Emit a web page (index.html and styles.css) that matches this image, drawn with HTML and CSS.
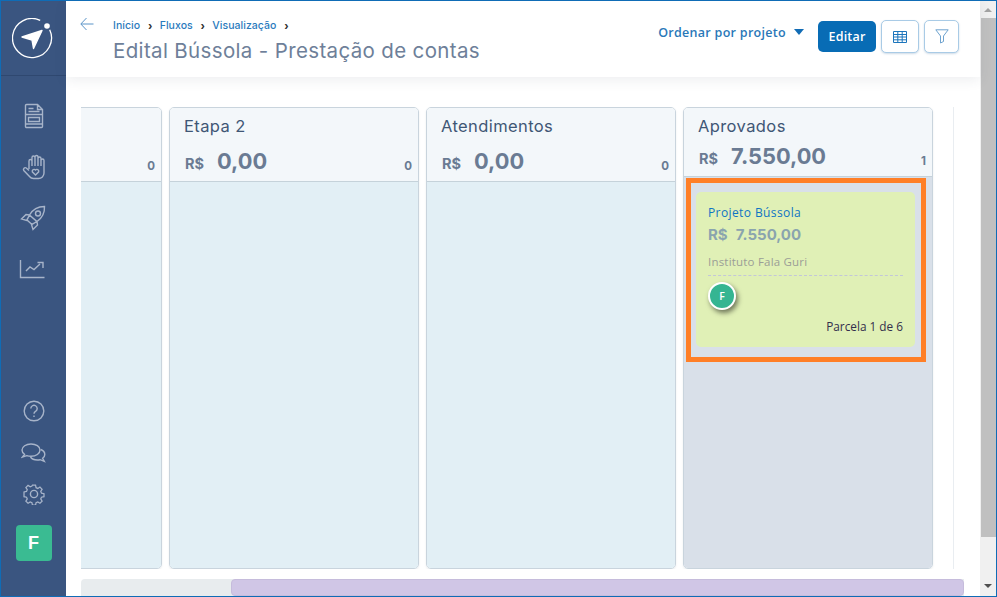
FILE: index.html
```html
<!DOCTYPE html>
<html lang="pt-BR">
<head>
<meta charset="utf-8">
<title>Edital Bússola - Prestação de contas</title>
<link rel="stylesheet" href="styles.css">
</head>
<body>
<div class="window">
  <aside class="sidebar">
    <div class="logo">
      <svg width="43" height="42" viewBox="0 0 43 42" fill="none">
        <path d="M37.7 11.800A19.500 19.500 0 1 1 28.200 2.300" stroke="#fff" stroke-width="1.300"/>
        <circle cx="35" cy="8" r="2.800" fill="#fff"/>
        <path d="M10 19 30 12.500 21.500 30.500 20 22Z" fill="#fff" stroke="#fff" stroke-width="1.400" stroke-linejoin="round"/>
      </svg>
    </div>
    <nav class="nav-top">
      <svg class="ico" width="22" height="26" viewBox="0 0 22 26"><path d="M2.500 2.500a1 1 0 0 1 1-1h11l5 5v17a1 1 0 0 1-1 1h-15a1 1 0 0 1-1-1zM14.500 1.500v5h5M5.500 5.500h5M5.500 8.500h11M2.500 11.500h17M5.500 14.500h11v4h-11zM2.500 21h17"/></svg>
      <svg class="ico" width="24" height="26" viewBox="0 0 24 26"><path d="M7 15V7a1.500 1.500 0 0 1 3 0V3.500a1.500 1.500 0 0 1 3 0V3a1.500 1.500 0 0 1 3 0V4.500a1.500 1.500 0 0 1 3 0V6.500a1.500 1.500 0 0 1 3 0V19a5.500 5.500 0 0 1-5.500 5.500H11.500A5 5 0 0 1 7.500 22.500L1.800 16.500a1.800 1.800 0 0 1 2.500-2.500L7 16.500M10 7V12M13 3.500V12M16 3V12M19 4.500V12"/><path d="M13.500 21 10.300 17.800a1.900 1.900 0 0 1 3.200-1.800 1.900 1.900 0 0 1 3.200 1.800z"/></svg>
      <svg class="ico rocket" width="26" height="26" viewBox="0 0 26 26"><path d="M24.500 1.500C24.800 8 22 13 17 16.500L9.500 10C13 4 18 1.500 24.500 1.500ZM9.500 10 6 9.500 1.500 14l5 1.500zM17 16.500 17.500 20 13 24.500l-1.500-5zM9.500 10 7 15l5 4.500 5-3"/><circle cx="18" cy="8.500" r="2.500"/></svg>
      <svg class="ico chart" width="26" height="20" viewBox="0 0 26 20"><path d="M1.500 1v17.500H25.500M7 12l4-4 4 2.500 6-5.500M18.500 3.500h5.500V9"/></svg>
    </nav>
    <nav class="nav-bottom">
      <svg class="ico" width="22" height="22" viewBox="0 0 22 22"><circle cx="11" cy="11" r="9.800"/><path d="M7.800 8.500a3.200 3.200 0 1 1 4.800 2.800c-1 .6-1.600 1.200-1.600 2.400"/><path d="M11 15.500v1.500"/></svg>
      <svg class="ico" width="25" height="20" viewBox="0 0 25 20"><path d="M10 1C5 1 1 3.600 1 7c0 1.800 1 3.200 2.500 4.300L1.500 14l4.300-1.300c1.300.4 2.700.6 4.200.6 5 0 9-2.700 9-6.300S15 1 10 1Z"/><path d="M19.700 6.500c2.500 1 4.100 2.800 4.100 4.900 0 1.600-.8 2.900-2.200 3.900l1.700 3-4.200-1.600c-.9.200-1.800.3-2.800.3-3 0-5.600-1.200-6.800-3"/></svg>
      <svg class="ico" width="22" height="22" viewBox="0 0 22 22"><path d="M9.300 1.200h3.400l.6 2.800 1.900.8 2.400-1.500 2.400 2.400-1.500 2.400.8 1.900 2.800.6v3.400l-2.800.6-.8 1.900 1.500 2.400-2.400 2.400-2.400-1.500-1.900.8-.6 2.800H9.300l-.6-2.800-1.900-.8-2.400 1.500-2.400-2.400 1.500-2.400-.8-1.900-2.800-.6V8.700l2.800-.6.8-1.900-1.500-2.400 2.400-2.400 2.400 1.500 1.900-.8z" transform="translate(1.100 1.100) scale(.9)"/><circle cx="11" cy="11" r="3.600"/></svg>
      <div class="user-tile">F</div>
    </nav>
  </aside>

  <div class="main">
    <header class="topbar">
      <svg class="back" width="14" height="14" viewBox="0 0 14 14" fill="none"><path d="M13.500 7H1M6.500 1 .8 7l5.700 6" stroke="#5b94c8" stroke-width="1"/></svg>
      <div class="heading">
        <div class="crumbs">
          <span>Início</span><i>›</i><span>Fluxos</span><i>›</i><span>Visualização</span><i>›</i>
        </div>
        <h1>Edital Bússola - Prestação de contas</h1>
      </div>
      <div class="actions">
        <div class="sort">Ordenar por projeto<b class="caret"></b></div>
        <button class="btn-primary">Editar</button>
        <button class="btn-icon">
          <svg width="14" height="12" viewBox="0 0 14 12" fill="none"><path d="M.5.500h13v11H.5zM.5 3.500h13M.5 6h13M.5 8.800h13M4.800 .500v11M9.200 .500v11" stroke="#1c75bc"/></svg>
        </button>
        <button class="btn-icon">
          <svg width="14" height="15" viewBox="0 0 14 15" fill="none"><path d="M.8.800h12.400L8.500 7v5.500L5.500 14V7z" stroke="#6fa3cf"/></svg>
        </button>
      </div>
    </header>

    <section class="board-wrap">
      <div class="board">
        <div class="column">
          <div class="col-head"><div class="col-title">&nbsp;</div><div class="col-sum"><span class="count">0</span></div></div>
          <div class="col-body"></div>
        </div>
        <div class="column">
          <div class="col-head"><div class="col-title">Etapa 2</div><div class="col-sum"><span class="cur">R$</span><span class="val">0,00</span><span class="count">0</span></div></div>
          <div class="col-body"></div>
        </div>
        <div class="column">
          <div class="col-head"><div class="col-title">Atendimentos</div><div class="col-sum"><span class="cur">R$</span><span class="val">0,00</span><span class="count">0</span></div></div>
          <div class="col-body"></div>
        </div>
        <div class="column">
          <div class="col-head col-head-short"><div class="col-title">Aprovados</div><div class="col-sum"><span class="cur">R$</span><span class="val">7.550,00</span><span class="count">1</span></div></div>
          <div class="col-body col-body-active">
            <div class="highlight">
              <article class="card">
                <div class="card-title">Projeto Bússola</div>
                <div class="card-value"><span>R$</span><span>7.550,00</span></div>
                <div class="card-org">Instituto Fala Guri</div>
                <div class="avatar">F</div>
                <div class="card-foot">Parcela 1 de 6</div>
              </article>
            </div>
          </div>
        </div>
      </div>
    </section>

    <div class="hscroll"><div class="hscroll-thumb"></div></div>
  </div>

  <div class="vscroll">
    <span class="arrow-up"></span>
    <div class="vscroll-thumb"></div>
    <span class="arrow-down"></span>
  </div>
</div>
</body>
</html>
```
FILE: styles.css
```css
* { box-sizing: border-box; }
html, body { margin: 0; padding: 0; height: 100%; overflow: hidden; background: #fff; }
.window {
  width: 997px; height: 597px; display: flex;
  border: 1px solid #0f6cb6;
  font-family: "Open Sans", sans-serif;
  overflow: hidden;
}
.sidebar {
  width: 65px; flex: none; background: #3a5580;
  display: flex; flex-direction: column; align-items: center;
}
.logo {
  width: 100%; height: 75px; flex: none;
  display: flex; align-items: center; justify-content: center;
  border-bottom: 1px solid #2f4870;
  padding-top: 1px;
}
.ico { fill: none; stroke: #a7b4c9; stroke-width: 1.4; display: block; }
.nav-top { display: flex; flex-direction: column; align-items: center; gap: 25px; margin-top: 27px; }
.rocket { margin-left: -2px; }
.chart { margin-top: 3px; margin-left: -4px; }
.nav-bottom { display: flex; flex-direction: column; align-items: center; gap: 20px; margin-top: auto; padding-bottom: 35px; }
.nav-bottom .ico:first-child { margin-bottom: 1px; }
.user-tile {
  width: 36px; height: 36px; border-radius: 4px; background: #3abb92;
  color: #fff; font: 700 18px/36px "Liberation Sans", sans-serif; text-align: center;
}
.main { width: 914px; flex: none; display: flex; flex-direction: column; min-width: 0; }
.topbar {
  height: 76px; flex: none; display: flex; align-items: flex-start;
  padding: 16px 21px 0 14px; background: #fff;
  box-shadow: 0 3px 12px rgba(60,70,90,.09);
  position: relative;
}
.back { flex: none; }
.heading { margin-left: 19px; }
.crumbs {
  display: flex; align-items: center; gap: 6px; height: 18px;
  font: 500 10.500px/18px "Inter", sans-serif; color: #2a7bbd; letter-spacing: .05px;
}
.crumbs span { margin-right: .5px; }
.crumbs i { font: 700 13px/16px "Liberation Sans", sans-serif; color: #333; width: 7px; text-align: center; }
h1 {
  margin: 3px 0 0; font: 400 20.500px/26px "Inter", sans-serif; color: #6e7f99;
  letter-spacing: .35px; white-space: nowrap;
}
.actions { margin-left: auto; display: flex; align-items: center; margin-top: 3px; }
.sort {
  font: 600 12.500px/20px "Open Sans", sans-serif; color: #2a78b8; letter-spacing: .3px;
  display: flex; align-items: center; margin-right: 14px; margin-top: -8px; white-space: nowrap;
}
.caret {
  width: 0; height: 0; margin-left: 8px;
  border-left: 5.500px solid transparent; border-right: 5.500px solid transparent; border-top: 6px solid #116cb5;
  margin-top: -2px;
}
.btn-primary {
  width: 58px; height: 31px; border: 0; border-radius: 5px; background: #086cb5;
  color: #fff; font: 600 12.500px/31px "Open Sans", sans-serif; letter-spacing: .2px; padding: 0;
}
.btn-icon {
  width: 38px; height: 33px; margin-left: 5px; padding: 0; background: #fff;
  border: 1px solid #a9cbe6; border-radius: 5px;
  display: flex; align-items: center; justify-content: center;
  box-shadow: 0 1px 2px rgba(60,110,160,.25);
}
.btn-icon + .btn-icon { width: 35px; }
.board-wrap {
  flex: none; margin: 30px 0 0 15px; width: 873px; height: 462px;
  overflow: hidden; border-right: 1px solid #e9edf1;
}
.board { display: flex; gap: 7px; margin-left: -169px; height: 462px; }
.column {
  width: 250px; flex: none; display: flex; flex-direction: column;
  border: 1px solid #c9d4dd; border-radius: 5px; overflow: hidden;
  box-shadow: 0 1px 2px rgba(80,100,120,.12);
}
.col-head { height: 74px; flex: none; background: #f3f7fa; border-bottom: 1px solid #c5d2da; padding: 8px 6px 0 14px; }
.col-head-short { height: 69px; }
.col-title { font: 400 16.500px/20px "Inter", sans-serif; color: #3f5675; height: 20px; letter-spacing: .4px; white-space: nowrap; }
.col-sum { display: flex; align-items: baseline; margin-top: 11px; color: #6a7b93; height: 28px; }
.col-head-short .col-sum { margin-top: 6px; }
.cur { font: 700 14.500px/28px "Inter", sans-serif; margin-left: 1px; width: 32px; }
.val { font: 700 21.800px/28px "Inter", sans-serif; }
.count { font: 700 11.500px/14px "Inter", sans-serif; margin-left: auto; align-self: flex-end; margin-bottom: 2px; }
.col-body { flex: 1; background: #e2eff5; }
.col-body-active { background: #d9e0e9; padding: 1px 0 0 2px; }
.highlight { width: 240px; height: 184px; border: 5px solid #ff7f27; padding: 9px 6px 10px 5px; }
.card {
  height: 155px; background: #e0f0b6; border-radius: 5px; padding: 12px 12px 0 12px;
}
.card-title { font: 400 12px/17px "Open Sans", sans-serif; color: #0f74c4; letter-spacing: .4px; white-space: nowrap; }
.card-value { display: flex; gap: 8px; margin-top: 4px; font: 700 15px/20px "Inter", sans-serif; color: #8aa4ae; }
.card-org {
  margin-top: 7px; height: 24px; font: 400 11.500px/20px "Open Sans", sans-serif; color: #9b9e96;
  border-bottom: 1px dashed #c3c7d8; letter-spacing: .2px;
}
.avatar {
  width: 28px; height: 28px; margin-top: 6px; border-radius: 50%; background: #35b592;
  border: 2px solid #fff; color: #fff; text-align: center;
  font: 600 10.500px/24px "Open Sans", sans-serif;
  box-shadow: 2px 3px 5px rgba(0,0,0,.5);
}
.card-foot { margin-top: 8px; text-align: right; font: 400 11.800px/16px "Open Sans", sans-serif; color: #332e4c; }
.hscroll { margin: 10px 0 0 15px; width: 883px; height: 17px; background: #e8ecee; border-radius: 4px 0 0 0; overflow: hidden; }
.hscroll-thumb { margin-left: 150px; height: 17px; background: #d0c6e6; border: 1px solid #c6bcdc; border-radius: 4px; }
.vscroll {
  flex: 1; background: #f0f0f0; display: flex; flex-direction: column; align-items: center;
}
.vscroll-thumb { width: 15px; height: 519px; background: #c0c0c0; margin-top: 6px; flex: none; }
.arrow-up, .arrow-down { width: 0; height: 0; flex: none; border-left: 4px solid transparent; border-right: 4px solid transparent; }
.arrow-up { border-bottom: 4px solid #a3a3a3; margin-top: 7px; }
.arrow-down { border-top: 4px solid #505050; margin-top: 47px; }
```
